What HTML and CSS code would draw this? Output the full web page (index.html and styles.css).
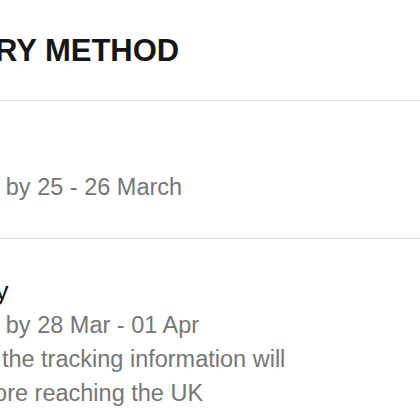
FILE: index.html
```html
<!DOCTYPE html>
<html lang="en">
<head>
    <meta charset="UTF-8">
    <meta name="viewport" content="width=device-width, initial-scale=1.0">
    <title>Delivery Method</title>
    <link rel="stylesheet" href="styles.css">
</head>
<body>

    <!-- Delivery options -->
    <div class="delivery">
        <h1 class="delivery-title">DELIVERY METHOD</h1>

        <div class="option">
            <h2>Express</h2>
            <p>Delivered by 25 - 26 March</p>
        </div>

        <div class="option">
            <h2>Economy</h2>
            <p>Delivered by 28 Mar - 01 Apr</p>
            <p>Note that the tracking information will show before reaching the UK</p>
        </div>
    </div>

</body>
</html>
```

FILE: styles.css
```css
/* Global Styles */
* {
    margin: 0;
    padding: 0;
    box-sizing: border-box;
    font-family: "Liberation Sans", Arial, sans-serif;
}

body {
    background-color: #fff;
    overflow: hidden;
}

.delivery {
    margin-left: -117px;
    width: 560px;
}

.delivery-title {
    font-size: 31px;
    line-height: 36px;
    font-weight: bold;
    color: #161616;
    padding: 33px 0 31px;
    border-bottom: 1px solid #dedede;
}

/* Options */
.option {
    padding: 35px 0 34px 17px;
    border-bottom: 1px solid #dedede;
}

.option h2 {
    font-size: 26px;
    line-height: 34px;
    font-weight: normal;
    color: #111;
}

.option p {
    font-size: 23.5px;
    line-height: 34px;
    color: #767676;
    max-width: 400px;
}
```
